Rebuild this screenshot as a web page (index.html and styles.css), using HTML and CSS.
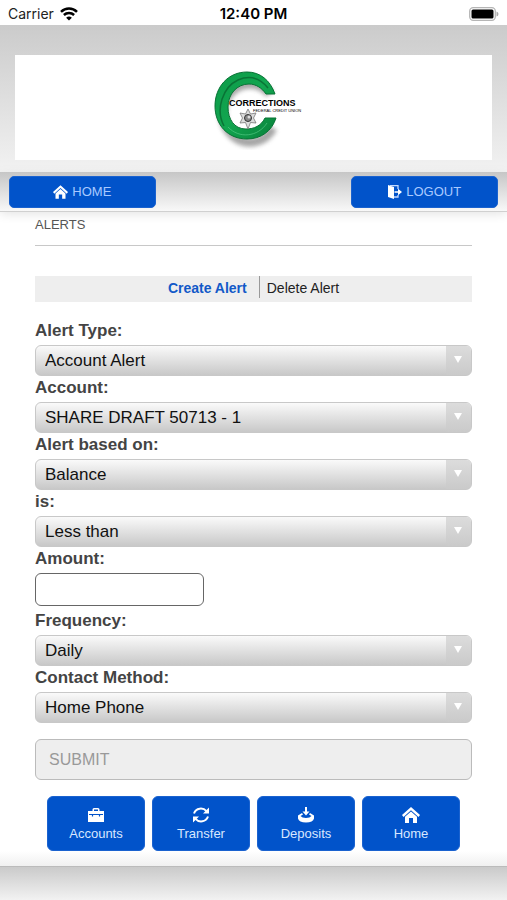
FILE: index.html
```html
<!DOCTYPE html>
<html lang="en">
<head>
<meta charset="UTF-8">
<meta name="viewport" content="width=device-width, initial-scale=1">
<title>Alerts</title>
<link rel="stylesheet" href="styles.css">
</head>
<body>
<div class="statusBar">
	<div class="carrier">
		<span>Carrier</span>
		<svg width="18" height="14" viewBox="0 0 18 14" fill="none" stroke="#000" stroke-width="2.5"><path d="M1 4.8C5.5 .4 12.500 .4 17 4.800M3.900 8C6.800 5.200 11.200 5.200 14.100 8"/><path d="M9 13.600L6.100 10.700Q9 8.300 11.900 10.700Z" fill="#000" stroke="none"/></svg>
	</div>
	<div class="clock">12:40 PM</div>
	<div class="battery">
		<svg width="30" height="14" viewBox="0 0 30 14"><rect x=".7" y=".7" width="25.600" height="12.600" rx="3.500" fill="#fff" stroke="#b5b5b5" stroke-width="1.300"/><rect x="2.500" y="2.500" width="22" height="9" rx="1.500"/><path d="M27.500 4.500Q29.500 5 29.500 7T27.500 9.500Z" fill="#aaa"/></svg>
	</div>
</div>

<div class="header">
	<div class="logo">
		<svg width="100" height="84" viewBox="-5 0 100 84" role="img" aria-label="Corrections Federal Credit Union">
			<defs>
				<linearGradient id="ring" x1="0" y1="0" x2="1" y2="1">
					<stop offset="0" stop-color="#0c9a48"/>
					<stop offset=".5" stop-color="#12a650"/>
					<stop offset="1" stop-color="#08803a"/>
				</linearGradient>
				<filter id="soft" x="-20%" y="-20%" width="140%" height="140%"><feGaussianBlur stdDeviation="2"/></filter>
			</defs>
			<path d="M58 24A27 29 0 1 0 61 58" fill="none" stroke="#777" stroke-width="9" opacity=".65" filter="url(#soft)" transform="translate(3 4)"/>
			<path d="M66 28C61 14 51 6 38 6C19 6 6 21 6 40C6 59 19 73 38 73C52 73 63 65 67 52L56 52C52 60 45 63 37 63C25 63 19 53 19 41C19 28 28 18 40 18C47 18 53 22 57 28Z" fill="url(#ring)" stroke="#087235" stroke-width="1"/>
			<path d="M15 60C6 43 14 21 29 14C41 9 51 12 59 22" fill="none" stroke="#075f2c" stroke-width="1.500" opacity=".7"/>
			<path d="M19 61C30 73 49 71 58 57" fill="none" stroke="#5bd18c" stroke-width="1" opacity=".6"/>
			<path d="M39 43L41.500 48L47 47L44.500 52L47 57L41.500 56.500L39 63L36.500 56.500L31 57L33.500 52L31 47L36.500 48Z" fill="#ddd" stroke="#777" stroke-width=".8"/>
			<circle cx="39" cy="52" r="3.500" fill="#888" stroke="#333"/>
			<circle cx="40" cy="51" r="1.500" fill="#ddd"/>
			<text class="logoName" x="20" y="40">CORRECTIONS</text>
			<text class="logoSub" x="44" y="46">FEDERAL CREDIT UNION</text>
		</svg>
	</div>
</div>

<div class="navBar">
	<button type="button" class="navButton">
		<svg width="15" height="14" viewBox="0 0 18 16" fill="#fff"><path d="M0 8L9 0L18 8L16.500 10L9 3.300L1.500 10Z"/><path d="M3 9.800L9 4.500L15 9.800V16H11V11H7V16H3Z"/></svg>
		<span>HOME</span>
	</button>
	<button type="button" class="navButton">
		<svg width="14" height="14" viewBox="0 0 14 14" fill="#fff"><path d="M0 0L6 2V14L0 12Z"/><path d="M2 .7H10V4M10 10V12H6" fill="none" stroke="#c3d9ff" stroke-width="1.300"/><path d="M6.500 6.200H10V3.800L14 7L10 10.200V7.800H6.500Z"/></svg>
		<span>LOGOUT</span>
	</button>
</div>

<div class="content">
	<h1 class="title">ALERTS</h1>
	<div class="tabs">
		<a href="#" class="tab active">Create Alert</a>
		<a href="#" class="tab">Delete Alert</a>
	</div>
	<form class="alertForm">
		<label for="alertType">Alert Type:</label>
		<div class="selectBox"><select id="alertType"><option>Account Alert</option></select></div>
		<label for="account">Account:</label>
		<div class="selectBox"><select id="account"><option>SHARE DRAFT 50713 - 1</option></select></div>
		<label for="basedOn">Alert based on:</label>
		<div class="selectBox"><select id="basedOn"><option>Balance</option></select></div>
		<label for="compare">is:</label>
		<div class="selectBox"><select id="compare"><option>Less than</option></select></div>
		<label for="amount">Amount:</label>
		<input type="text" id="amount" class="amount">
		<label for="frequency">Frequency:</label>
		<div class="selectBox"><select id="frequency"><option>Daily</option></select></div>
		<label for="contact">Contact Method:</label>
		<div class="selectBox"><select id="contact"><option>Home Phone</option></select></div>
		<button type="submit" class="submit" disabled>SUBMIT</button>
	</form>
	<div class="bottomNav">
		<button type="button" class="bottomButton">
			<svg width="18" height="16" viewBox="0 0 18 16" fill="#fff"><path d="M5.500 4V2.500Q5.500 1 7 1H11Q12.500 1 12.500 2.500V4H11V2.400H7V4Z"/><path d="M1 4H17V15H1Z"/><path d="M2 7.500H16M5.500 7V9.500M12.500 7V9.500" stroke="#0153ca" stroke-width="1.200"/></svg>
			<span>Accounts</span>
		</button>
		<button type="button" class="bottomButton">
			<svg width="18" height="16" viewBox="0 0 18 16"><path d="M2 6.500C4 .8 11 .2 14.500 4.200M16 9.500C14 15.200 7 15.800 3.500 11.800" fill="none" stroke="#fff" stroke-width="2"/><path d="M17 .5V6.500H11ZM1 15.500V9.500H7Z" fill="#fff"/></svg>
			<span>Transfer</span>
		</button>
		<button type="button" class="bottomButton">
			<svg width="18" height="16" viewBox="0 0 18 16" fill="#fff"><path d="M8 0H10V4.500H12.500L9 8.500L5.500 4.500H8Z"/><path d="M5 6L1 8.500V11.500Q2 15.500 9 15.500T17 11.500V8.500L13 6L12 7.500L14.500 9Q13 11 9 11T3.500 9L6 7.500Z"/></svg>
			<span>Deposits</span>
		</button>
		<button type="button" class="bottomButton">
			<svg width="18" height="16" viewBox="0 0 18 16" fill="#fff"><path d="M0 8L9 0L18 8L16.500 10L9 3.300L1.500 10Z"/><path d="M3 9.800L9 4.500L15 9.800V16H11V11H7V16H3Z"/></svg>
			<span>Home</span>
		</button>
	</div>
</div>
<div class="footer"></div>
</body>
</html>
```

FILE: styles.css
```css
* {
	box-sizing: border-box;
}

body {
	font-family: "Liberation Sans", Arial, Helvetica, sans-serif;
	margin: 0;
	min-height: 100vh;
	background: #fff;
	display: flex;
	flex-direction: column;
}

button {
	font-family: inherit;
	cursor: pointer;
}

/* phone status bar */
.statusBar {
	display: grid;
	grid-template-columns: 1fr auto 1fr;
	align-items: center;
	height: 25px;
	padding: 2px 8px 0;
	font-family: Inter, "Liberation Sans", sans-serif;
	font-size: 14px;
}

.carrier {
	display: flex;
	align-items: center;
	gap: 6px;
	color: #222;
}

.clock {
	font-size: 15px;
	font-weight: 600;
}

.battery {
	display: flex;
	justify-content: flex-end;
}

.header {
	padding: 30px 15px 12px;
	background: linear-gradient(#cbcbcb, #f2f2f2);
}

.logo {
	display: flex;
	justify-content: center;
	align-items: center;
	height: 105px;
	background: #fff;
}

.logoName {
	font-family: "Liberation Sans", sans-serif;
	font-size: 9px;
	font-weight: bold;
}

.logoSub {
	font-family: "Liberation Sans", sans-serif;
	font-size: 4px;
}

.navBar {
	display: flex;
	justify-content: space-between;
	align-items: center;
	height: 40px;
	padding: 0 9px;
	background: linear-gradient(#c6c6c6, #f8f8f8);
	border-bottom: 1px solid #d0d0d0;
	box-shadow: 0 2px 10px #e4e4e4;
}

.navButton {
	display: flex;
	justify-content: center;
	align-items: center;
	gap: 4px;
	width: 30%;
	height: 32px;
	padding: 0;
	border: 1px solid #1a62cf;
	border-radius: 5px;
	background: #0153ca;
	color: #a9c9ff;
	font-size: 13px;
}

.content {
	padding: 0 35px 15px;
	background: linear-gradient(to top, #f0f0f0, rgba(255, 255, 255, 0) 15px);
}

.title {
	margin: 0 0 30px;
	padding: 4px 0 11px;
	border-bottom: 1px solid #c8c8c8;
	color: #555;
	font-size: 13px;
	font-weight: normal;
	line-height: 18px;
}

.tabs {
	display: flex;
	justify-content: center;
	align-items: flex-start;
	height: 26px;
	margin-bottom: 17px;
	background: #eee;
}

.tab {
	padding: 2px 7px 0;
	color: #222;
	font-size: 14px;
	line-height: 20px;
	text-decoration: none;
}

.tab.active {
	padding-right: 12px;
	border-right: 1px solid #999;
	color: #1259c8;
	font-weight: bold;
}

.alertForm {
	display: flex;
	flex-direction: column;
}

.alertForm label {
	margin-bottom: 2px;
	color: #444;
	font-size: 17px;
	font-weight: bold;
	line-height: 24px;
}

.selectBox {
	position: relative;
	height: 31px;
	border: 1px solid #c8c8c8;
	border-radius: 6px;
	background: linear-gradient(#fafafa, #c8c8c8);
	overflow: hidden;
}

.selectBox select {
	appearance: none;
	width: 100%;
	height: 100%;
	padding: 0 35px 0 9px;
	border: none;
	background: none;
	color: #111;
	font-family: inherit;
	font-size: 17px;
}

/* arrow box on the right side of each drop-down */
.selectBox::before {
	content: "";
	position: absolute;
	top: 0;
	right: 0;
	width: 25px;
	height: 100%;
	background: linear-gradient(#dcdcdc, #cacaca);
}

.selectBox::after {
	content: "";
	position: absolute;
	top: 10px;
	right: 9px;
	border: 4px solid transparent;
	border-top: 7px solid #fff;
	border-bottom: none;
}

.amount {
	width: 169px;
	height: 33px;
	margin-bottom: 3px;
	padding: 0 8px;
	border: 1px solid #666;
	border-radius: 6px;
	background: #fff;
	font-family: inherit;
	font-size: 17px;
}

.submit {
	height: 41px;
	margin-top: 16px;
	padding: 0 13px;
	border: 1px solid #bbb;
	border-radius: 6px;
	background: #eee;
	color: #999;
	font-size: 16px;
	text-align: left;
}

.bottomNav {
	display: grid;
	grid-template-columns: repeat(4, 1fr);
	gap: 7px;
	margin-top: 16px;
	padding: 0 12px;
}

.bottomButton {
	display: flex;
	flex-direction: column;
	align-items: center;
	justify-content: center;
	gap: 3px;
	height: 55px;
	padding: 0;
	border: 1px solid #1a62cf;
	border-radius: 6px;
	background: #0153ca;
	color: #d8e7ff;
	font-size: 13px;
}

.footer {
	flex-grow: 1;
	min-height: 33px;
	border-top: 1px solid #bbb;
	background: linear-gradient(#cacaca, #f2f2f2);
}
```
